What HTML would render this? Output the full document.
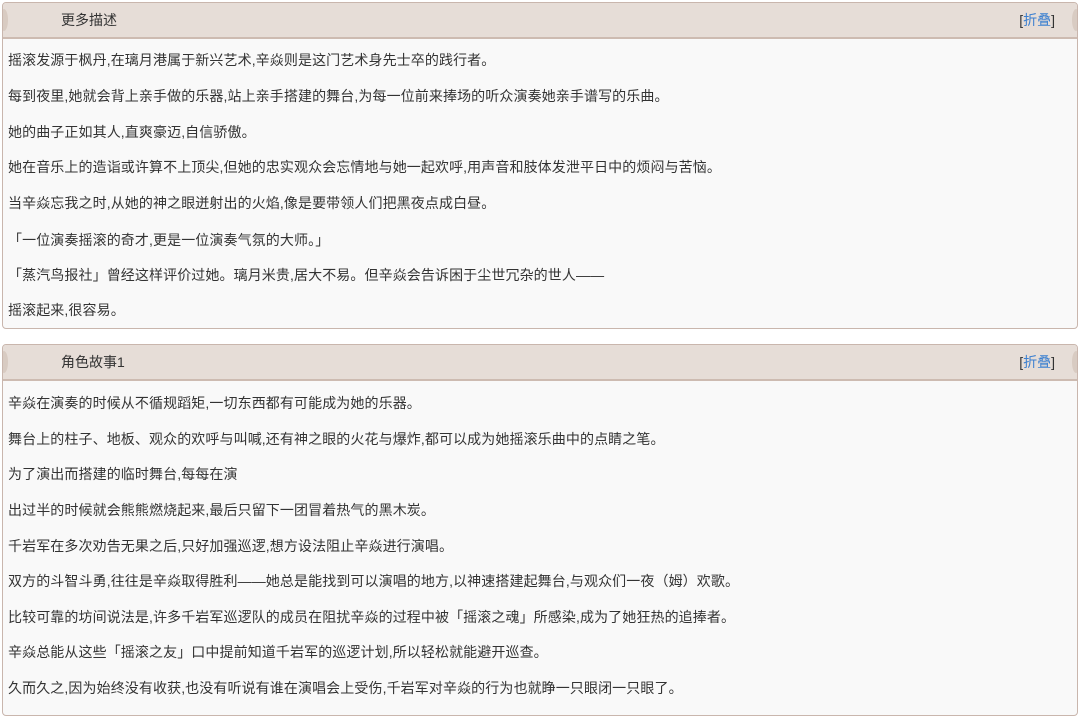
<!DOCTYPE html>
<html><head><meta charset="utf-8"><style>
body{margin:0;width:1080px;height:708px;overflow:hidden;background:#fff;font-family:"Liberation Sans","Noto Sans CJK SC",sans-serif;color:#333;}
.p{position:absolute;left:2px;width:1074px;border:1px solid #c9b6ad;border-radius:4px;background:#f9f9f9;overflow:hidden;}
.h{height:34px;background:#e6ddd7;border-bottom:2px solid #cdbbb1;position:relative;font-size:14px;line-height:34px;}
.h .t{position:absolute;left:58px;}
.h .f{position:absolute;right:22px;color:#333;}
.h .f span{color:#3a7fd0;}
.h:before,.h:after{content:"";position:absolute;top:6px;width:8px;height:22px;background:#d8cbc2;border-radius:50%;}
.h:before{left:-3px}.h:after{right:-3px}
.l{position:absolute;left:8px;font-size:14px;white-space:nowrap;letter-spacing:0.1px;}
</style></head><body>
<div class="p" style="top:2px;height:325px;">
<div class="h"><span class="t">更多描述</span><span class="f">[<span>折叠</span>]</span></div>
</div>
<div class="p" style="top:344px;height:370px;">
<div class="h"><span class="t">角色故事1</span><span class="f">[<span>折叠</span>]</span></div>
</div>
<div class="l" style="top:50px">摇滚发源于枫丹,在璃月港属于新兴艺术,辛焱则是这门艺术身先士卒的践行者。</div>
<div class="l" style="top:86px">每到夜里,她就会背上亲手做的乐器,站上亲手搭建的舞台,为每一位前来捧场的听众演奏她亲手谱写的乐曲。</div>
<div class="l" style="top:122px">她的曲子正如其人,直爽豪迈,自信骄傲。</div>
<div class="l" style="top:157px">她在音乐上的造诣或许算不上顶尖,但她的忠实观众会忘情地与她一起欢呼,用声音和肢体发泄平日中的烦闷与苦恼。</div>
<div class="l" style="top:193px">当辛焱忘我之时,从她的神之眼迸射出的火焰,像是要带领人们把黑夜点成白昼。</div>
<div class="l" style="top:230px">「一位演奏摇滚的奇才,更是一位演奏气氛的大师。」</div>
<div class="l" style="top:265px">「蒸汽鸟报社」曾经这样评价过她。璃月米贵,居大不易。但辛焱会告诉困于尘世冗杂的世人——</div>
<div class="l" style="top:300px">摇滚起来,很容易。</div>
<div class="l" style="top:393px">辛焱在演奏的时候从不循规蹈矩,一切东西都有可能成为她的乐器。</div>
<div class="l" style="top:429px">舞台上的柱子、地板、观众的欢呼与叫喊,还有神之眼的火花与爆炸,都可以成为她摇滚乐曲中的点睛之笔。</div>
<div class="l" style="top:464px">为了演出而搭建的临时舞台,每每在演</div>
<div class="l" style="top:500px">出过半的时候就会熊熊燃烧起来,最后只留下一团冒着热气的黑木炭。</div>
<div class="l" style="top:536px">千岩军在多次劝告无果之后,只好加强巡逻,想方设法阻止辛焱进行演唱。</div>
<div class="l" style="top:571px">双方的斗智斗勇,往往是辛焱取得胜利——她总是能找到可以演唱的地方,以神速搭建起舞台,与观众们一夜（姆）欢歌。</div>
<div class="l" style="top:607px">比较可靠的坊间说法是,许多千岩军巡逻队的成员在阻扰辛焱的过程中被「摇滚之魂」所感染,成为了她狂热的追捧者。</div>
<div class="l" style="top:642px">辛焱总能从这些「摇滚之友」口中提前知道千岩军的巡逻计划,所以轻松就能避开巡查。</div>
<div class="l" style="top:678px">久而久之,因为始终没有收获,也没有听说有谁在演唱会上受伤,千岩军对辛焱的行为也就睁一只眼闭一只眼了。</div>
</body></html>
